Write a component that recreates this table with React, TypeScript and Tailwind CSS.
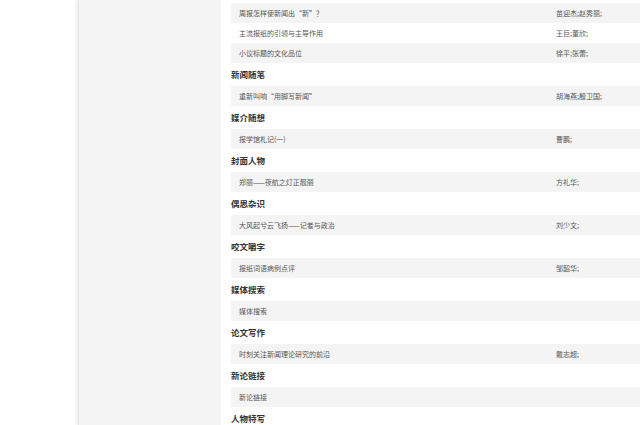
import React from "react";

type Row = { title: string; author: string };
type Section = { heading?: string; rows: Row[] };

const sections: Section[] = [
  {
    rows: [
      { title: "周报怎样使新闻出“新”？", author: "苗迎杰;赵秀丽;" },
      { title: "主流报纸的引领与主导作用", author: "王巨;董欣;" },
      { title: "小议标题的文化品位", author: "徐平;张蕾;" },
    ],
  },
  { heading: "新闻随笔", rows: [{ title: "重新叫响“用脚写新闻”", author: "胡海燕;殷卫国;" }] },
  { heading: "媒介随想", rows: [{ title: "报学馆札记(一)", author: "曹鹏;" }] },
  { heading: "封面人物", rows: [{ title: "郑丽——夜航之灯正靓丽", author: "方礼华;" }] },
  { heading: "偶思杂识", rows: [{ title: "大风起兮云飞扬——记者与政治", author: "刘少文;" }] },
  { heading: "咬文嚼字", rows: [{ title: "报纸词语病例点评", author: "邹韶华;" }] },
  { heading: "媒体搜索", rows: [{ title: "媒体搜索", author: "" }] },
  { heading: "论文写作", rows: [{ title: "时刻关注新闻理论研究的前沿", author: "戴志超;" }] },
  { heading: "新论链接", rows: [{ title: "新论链接", author: "" }] },
  { heading: "人物特写", rows: [] },
];

const font = { fontFamily: '"Noto Sans CJK SC", "Noto Sans", sans-serif' };

export default function App() {
  return (
    <div className="w-[640px] h-[425px] overflow-hidden flex bg-white" style={font}>
      <div className="w-[78px] shrink-0 bg-white" />
      <div className="w-[143px] shrink-0 bg-[#f4f4f4] shadow-[-2px_0_3px_rgba(0,0,0,0.08)] border-l border-[#e6e6e6]" />
      <div className="flex-1 bg-white pl-[10px] pt-[3px] overflow-hidden">
        <div className="w-[500px] flex flex-col">
          {sections.map((s, si) => (
            <div key={si} className="flex flex-col">
              {s.heading && (
                <div className="h-[23px] flex items-center text-[8.5px] font-bold text-[#333]">
                  {s.heading}
                </div>
              )}
              {s.rows.map((r, ri) => (
                <div
                  key={ri}
                  className={`h-[20px] flex items-center pl-[8px] text-[7px] text-[#555] ${
                    ri % 2 === 0 ? "bg-[#f4f4f4]" : "bg-white"
                  }`}
                >
                  <span className="w-[317px] shrink-0">{r.title}</span>
                  <span>{r.author}</span>
                </div>
              ))}
            </div>
          ))}
        </div>
      </div>
    </div>
  );
}
